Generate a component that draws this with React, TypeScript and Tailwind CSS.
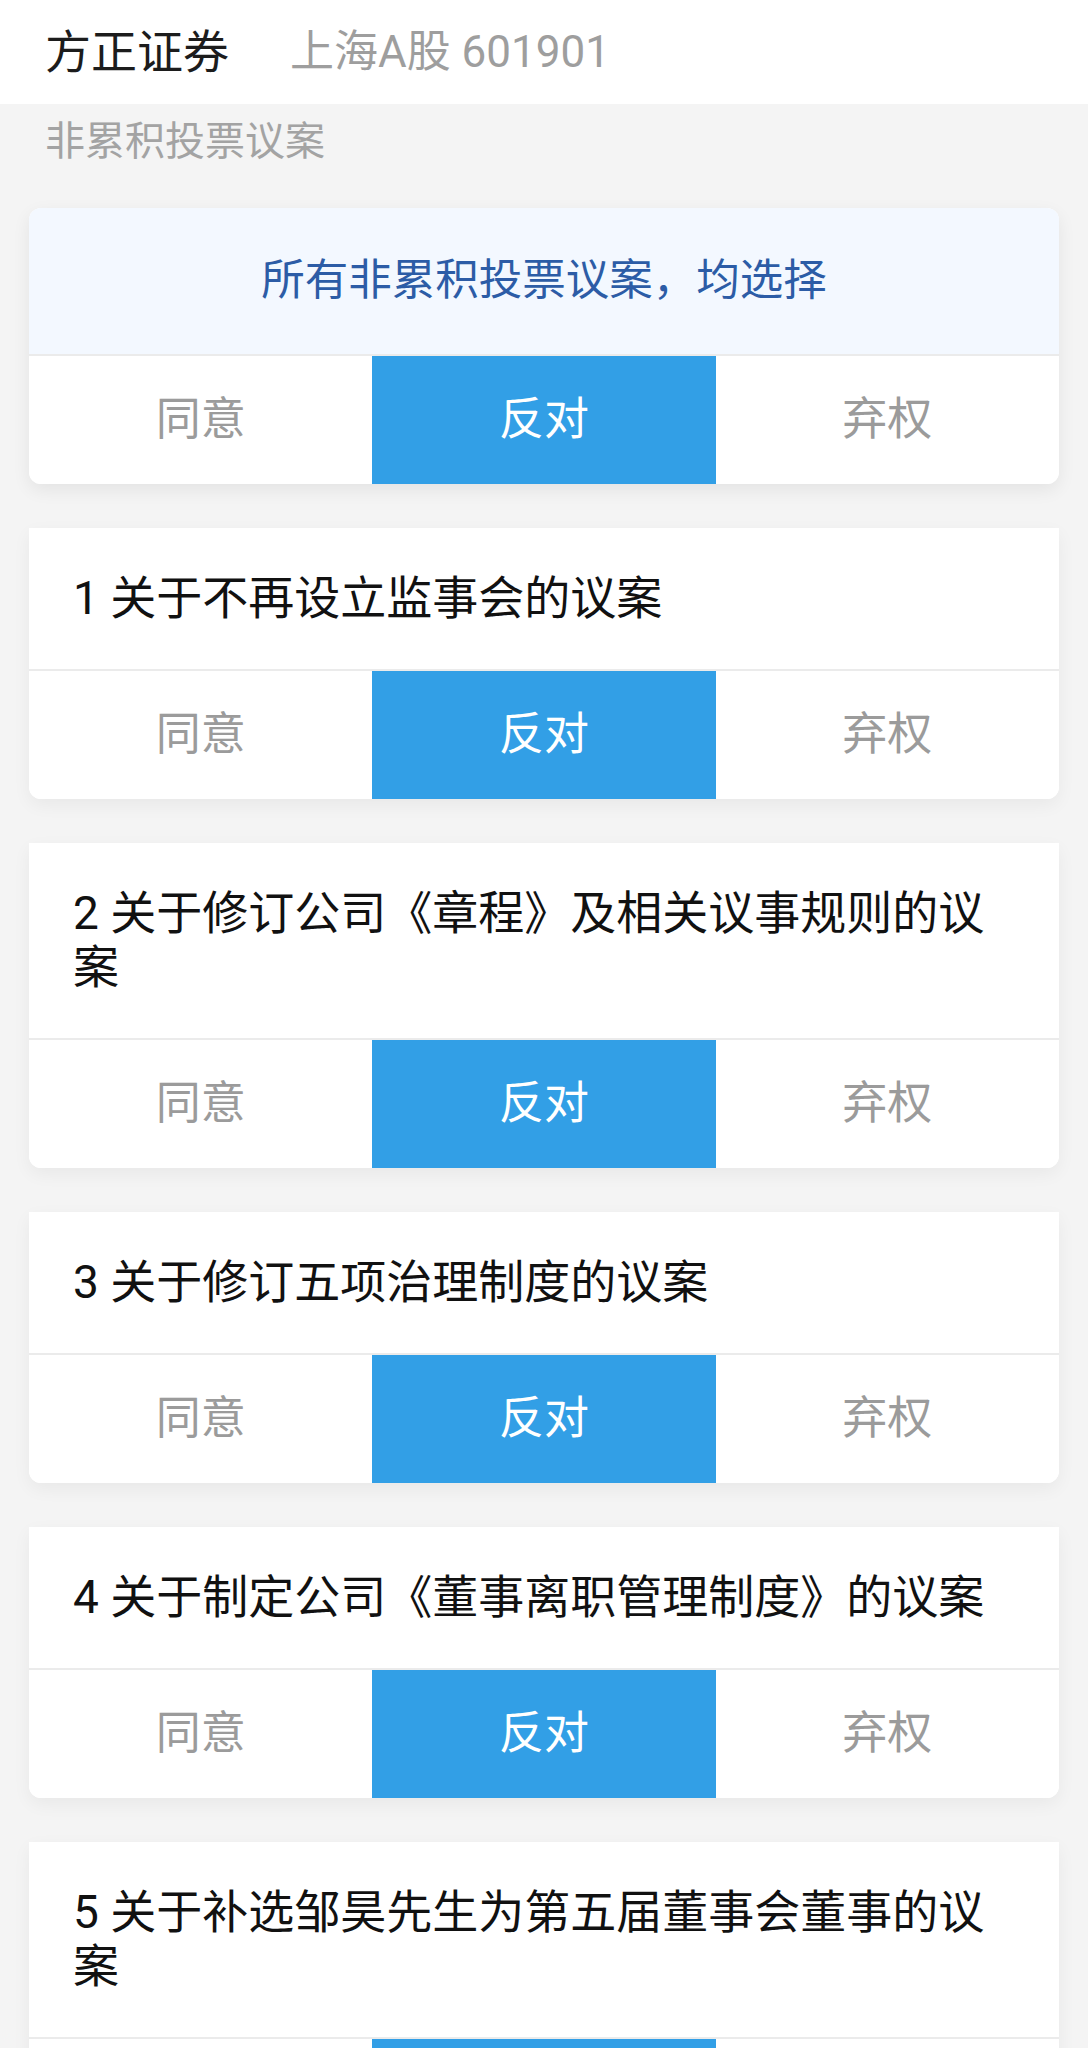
import React from 'react';

const proposals = [
    "1 关于不再设立监事会的议案",
    "2 关于修订公司《章程》及相关议事规则的议案",
    "3 关于修订五项治理制度的议案",
    "4 关于制定公司《董事离职管理制度》的议案",
    "5 关于补选邹昊先生为第五届董事会董事的议案",
];

const options = ["同意", "反对", "弃权"];

const VoteRow: React.FC<{ selected: number }> = ({ selected }) => (
    <div className="grid grid-cols-3 h-[130px] border-t-2 border-[#ebebeb]">
        {options.map((opt, idx) => (
            <div
                key={opt}
                className={
                    idx === selected
                        ? "flex items-center justify-center bg-[#329fe6] text-white text-[45px]"
                        : "flex items-center justify-center bg-white text-[#9b9b9b] text-[45px]"
                }
            >
                {opt}
            </div>
        ))}
    </div>
);

const App: React.FC = () => {
    return (
        <div className="min-h-screen bg-[#f4f4f4] font-['Roboto','Noto_Sans_CJK_SC',sans-serif]">
            <header className="h-[104px] bg-white flex items-center px-[45px]">
                <span className="text-[46px] text-[#1c1c1c]">方正证券</span>
                <span className="ml-[61px] text-[44px] text-[#9e9e9e]">上海A股 601901</span>
            </header>

            <div className="pl-[45px] pt-[8px] leading-[60px] text-[40px] text-[#a3a3a3]">非累积投票议案</div>

            <div className="px-[29px] pt-[36px] pb-[44px] flex flex-col gap-[44px]">
                <div className="rounded-[12px] overflow-hidden bg-white shadow-[0_6px_18px_rgba(0,0,0,0.07)]">
                    <div className="h-[146px] bg-[#f3f8ff] flex items-center justify-center text-[43.5px] text-[#2c5ca6]">
                        所有非累积投票议案，均选择
                    </div>
                    <VoteRow selected={1} />
                </div>

                {proposals.map((title) => (
                    <div key={title} className="rounded-b-[12px] overflow-hidden bg-white shadow-[0_6px_18px_rgba(0,0,0,0.05)]">
                        <div className="px-[44px] pt-[43px] pb-[44px] text-[46px] leading-[54px] text-[#111]">{title}</div>
                        <VoteRow selected={1} />
                    </div>
                ))}
            </div>
        </div>
    );
};

export default App;
